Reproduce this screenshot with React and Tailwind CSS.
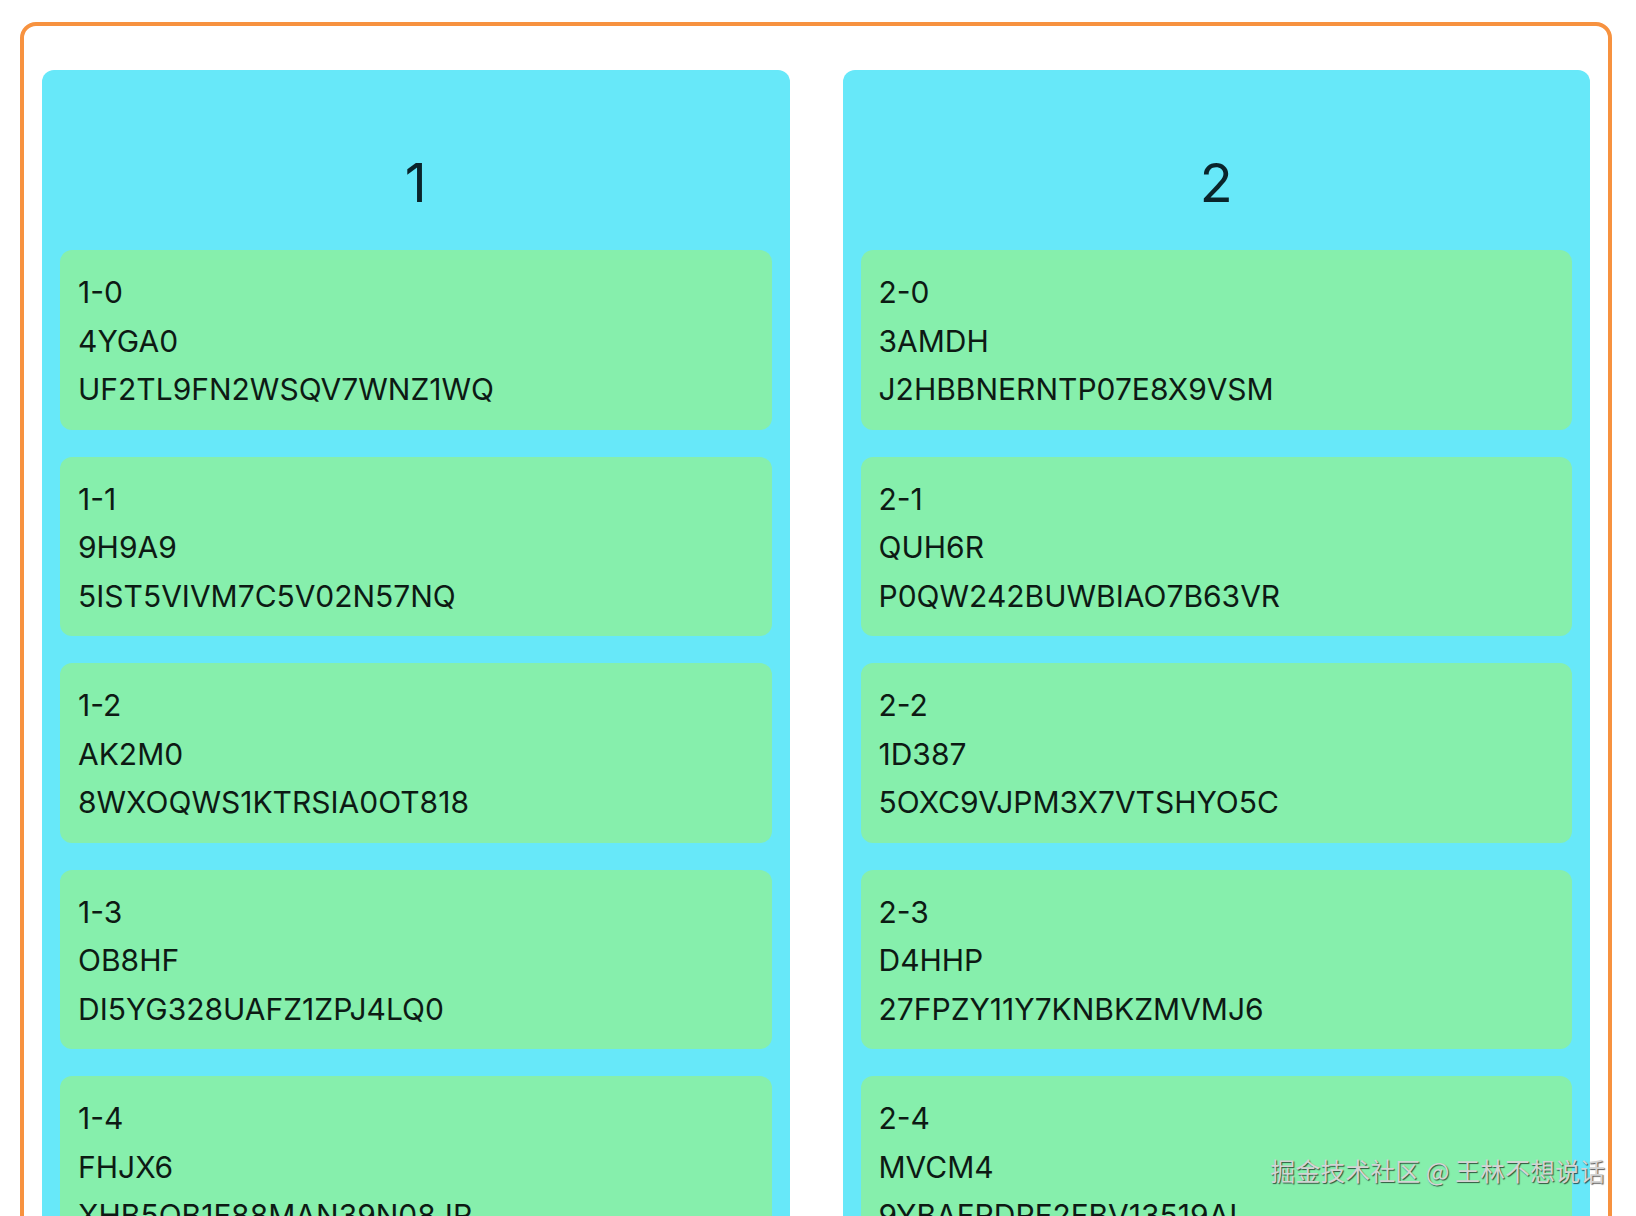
import React from "react";

const columns = [
  {
    title: "1",
    items: [
      ["1-0", "4YGA0", "UF2TL9FN2WSQV7WNZ1WQ"],
      ["1-1", "9H9A9", "5IST5VIVM7C5V02N57NQ"],
      ["1-2", "AK2M0", "8WXOQWS1KTRSIA0OT818"],
      ["1-3", "OB8HF", "DI5YG328UAFZ1ZPJ4LQ0"],
      ["1-4", "FHJX6", "XHB5OB1F88MAN39N08JR"],
    ],
  },
  {
    title: "2",
    items: [
      ["2-0", "3AMDH", "J2HBBNERNTP07E8X9VSM"],
      ["2-1", "QUH6R", "P0QW242BUWBIAO7B63VR"],
      ["2-2", "1D387", "5OXC9VJPM3X7VTSHYO5C"],
      ["2-3", "D4HHP", "27FPZY11Y7KNBKZMVMJ6"],
      ["2-4", "MVCM4", "9YBAFRDRF2FBV13519AL"],
    ],
  },
];

export default function App() {
  return (
    <div
      className="relative h-[1216px] overflow-hidden bg-white text-[#0d1a14]"
      style={{ fontFamily: "Inter, 'Noto Sans', 'Noto Sans CJK SC', sans-serif" }}
    >
      <div className="ml-[20px] mt-[22px] w-[1592px] rounded-[16px] border-[4px] border-[#f7923f] px-[18px] pt-[44px] pb-[40px]">
        <div className="grid grid-cols-2 gap-[53px]">
          {columns.map((col) => (
            <div key={col.title} className="rounded-[12px] bg-[#67e8f9] px-[18px] pt-[86px] pb-[20px]">
              <div className="text-center text-[54px] leading-[54px] text-[#0a242b]">{col.title}</div>
              <div className="mt-[40px] flex flex-col gap-[27px]">
                {col.items.map((it) => (
                  <div key={it[0]} className="rounded-[12px] bg-[#86efac] px-[18px] pt-[18px] pb-[16px] text-[30px] leading-[48.5px]">
                    {it.map((t) => (
                      <div key={t}>{t}</div>
                    ))}
                  </div>
                ))}
              </div>
            </div>
          ))}
        </div>
      </div>
      <div
        className="absolute right-[31px] top-[1158px] whitespace-nowrap text-[25px] leading-[25px] text-[#d4d4d4]"
        style={{
          fontFamily: "'Noto Sans CJK SC', sans-serif",
          textShadow: "1px 1px 1px rgba(0,0,0,0.65)",
        }}
      >
        掘金技术社区 @ 王林不想说话
      </div>
    </div>
  );
}
